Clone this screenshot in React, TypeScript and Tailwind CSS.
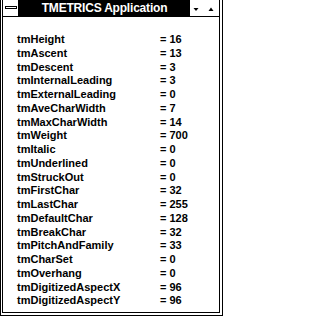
import React from 'react'

// TEXTMETRIC fields shown by the TMETRICS sample
const metrics: [string, string][] = [
  ['tmHeight', '16'],
  ['tmAscent', '13'],
  ['tmDescent', '3'],
  ['tmInternalLeading', '3'],
  ['tmExternalLeading', '0'],
  ['tmAveCharWidth', '7'],
  ['tmMaxCharWidth', '14'],
  ['tmWeight', '700'],
  ['tmItalic', '0'],
  ['tmUnderlined', '0'],
  ['tmStruckOut', '0'],
  ['tmFirstChar', '32'],
  ['tmLastChar', '255'],
  ['tmDefaultChar', '128'],
  ['tmBreakChar', '32'],
  ['tmPitchAndFamily', '33'],
  ['tmCharSet', '0'],
  ['tmOverhang', '0'],
  ['tmDigitizedAspectX', '96'],
  ['tmDigitizedAspectY', '96'],
]

function TitleBar() {
  return (
    <div className="flex h-[17px] border-b border-black">
      {/* system menu box */}
      <div className="w-[16px] border-r border-black bg-white flex items-start pt-[6px] pl-[2px]">
        <div className="w-[12px] h-[3px] border border-black bg-white" />
      </div>
      <div className="flex-1 bg-black flex items-center justify-center">
        <span className="text-white font-bold text-[12px] leading-none tracking-[-0.2px]">
          TMETRICS Application
        </span>
      </div>
      <div className="w-[29px] bg-white flex items-start">
        <svg width="29" height="16" viewBox="0 0 29 16">
          <polygon points="3.5,8 8.5,8 6,11" fill="black" />
          <polygon points="18.5,11 23.5,11 21,7.5" fill="black" />
        </svg>
      </div>
    </div>
  )
}

export default function App() {
  return (
    <div
      className="w-[223px] h-[316px] bg-white border-l border-r border-b border-black pl-px pr-[2px] pb-[2px]"
      style={{ fontFamily: '"Liberation Sans", Arial, sans-serif' }}
    >
      <div className="h-full border-l border-r border-b border-black flex flex-col">
        <TitleBar />
        <div className="pt-[16px] pl-[14px] grid grid-cols-[143px_1fr] text-[11px] leading-[13.75px] font-bold text-black">
          {metrics.map(([name, value]) => (
            <React.Fragment key={name}>
              <span>{name}</span>
              <span>= {value}</span>
            </React.Fragment>
          ))}
        </div>
      </div>
    </div>
  )
}
